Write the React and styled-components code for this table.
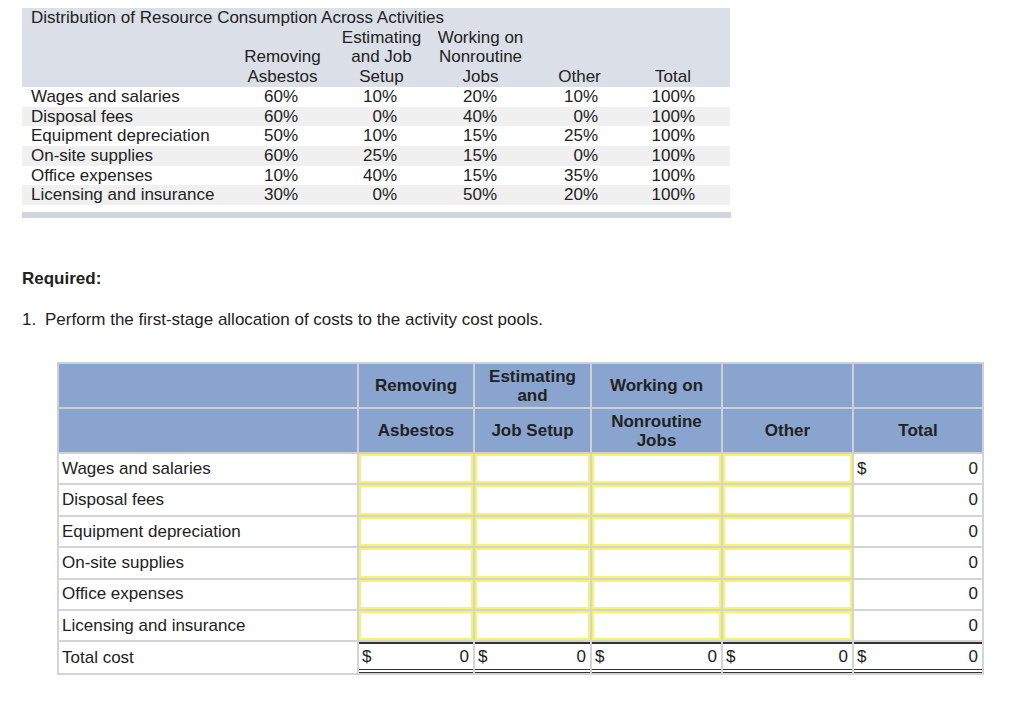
import React from "react";
import styled, { createGlobalStyle } from "styled-components";

const GlobalStyle = createGlobalStyle`
  body {
    margin: 0;
    background: #ffffff;
    font-family: "Liberation Sans", Arial, sans-serif;
    color: #222222;
  }
`;

const Page = styled.div`
  padding: 8px 0 0 22px;
  font-size: 17px;
`;

const DistTable = styled.table`
  width: 708px;
  border-collapse: collapse;
  table-layout: fixed;
  line-height: 19.7px;
`;

const TitleCell = styled.td`
  background: #dbdfe7;
  padding: 0 0 0 9px;
  white-space: nowrap;
`;

const HeadCell = styled.td`
  background: #dbdfe7;
  padding: 0;
  text-align: center;
  vertical-align: bottom;
  white-space: nowrap;
`;

const DistRow = styled.tr`
  background: ${(p) => (p.$shaded ? "#f0f0f0" : "#ffffff")};
`;

const LabelCell = styled.td`
  padding: 0 0 0 9px;
  white-space: nowrap;
`;

const PctCell = styled.td`
  padding: 0 ${(p) => p.$pr}px 0 0;
  text-align: right;
  white-space: nowrap;
`;

const Bar = styled.div`
  width: 709px;
  height: 6px;
  margin-top: 7px;
  background: #d1d5e0;
`;

const Required = styled.div`
  margin-top: 51px;
  line-height: 20px;
  font-weight: bold;
`;

const Step = styled.div`
  margin-top: 21px;
  line-height: 20px;
`;

const StepNum = styled.span`
  display: inline-block;
  width: 23px;
`;

const CostTable = styled.table`
  margin: 32px 0 0 35px;
  width: 925px;
  border-collapse: collapse;
  table-layout: fixed;
  border: 2px solid #d4d4d4;
`;

const BlueCell = styled.th`
  background: #88a4cf;
  border: 2px solid #d0d0d0;
  height: 43px;
  padding: 0 4px;
  font-weight: bold;
  line-height: 19px;
  text-align: center;
  vertical-align: middle;
  color: #222222;
`;

const BodyCell = styled.td`
  border: 2px solid #d4d4d4;
  height: 27.7px;
  padding: ${(p) => (p.$input ? "0" : "0 4px 0 3px")};
  text-align: ${(p) => (p.$num ? "right" : "left")};
  vertical-align: middle;
  white-space: nowrap;
`;

const InputBox = styled.div`
  height: 29.4px;
  box-sizing: border-box;
  border: 2px solid #f7f36a;
  background: #ffffff;
`;

const Money = styled.div`
  display: flex;
  justify-content: space-between;
`;

const TotalBox = styled.div`
  display: flex;
  justify-content: space-between;
  align-items: center;
  height: 30.5px;
  box-sizing: border-box;
  padding: 0 4px 0 3px;
  border-top: 2px solid #333333;
  border-bottom: 4px double #333333;
`;

const TotalCell = styled.td`
  border: 2px solid #d4d4d4;
  padding: 0;
  vertical-align: middle;
`;

const columns = [
  { head: ["", "Removing", "Asbestos"], pr: 34 },
  { head: ["Estimating", "and Job", "Setup"], pr: 34 },
  { head: ["Working on", "Nonroutine", "Jobs"], pr: 33 },
  { head: ["", "", "Other"], pr: 31 },
  { head: ["", "", "Total"], pr: 22 },
];

const distribution = [
  ["Wages and salaries", "60%", "10%", "20%", "10%", "100%"],
  ["Disposal fees", "60%", "0%", "40%", "0%", "100%"],
  ["Equipment depreciation", "50%", "10%", "15%", "25%", "100%"],
  ["On-site supplies", "60%", "25%", "15%", "0%", "100%"],
  ["Office expenses", "10%", "40%", "15%", "35%", "100%"],
  ["Licensing and insurance", "30%", "0%", "50%", "20%", "100%"],
];

const costRows = distribution.map((r) => r[0]);

export default function App() {
  return (
    <>
      <GlobalStyle />
      <Page>
        <DistTable>
          <colgroup>
            <col style={{ width: 211 }} />
            <col style={{ width: 99 }} />
            <col style={{ width: 99 }} />
            <col style={{ width: 99 }} />
            <col style={{ width: 99 }} />
            <col style={{ width: 88 }} />
            <col style={{ width: 13 }} />
          </colgroup>
          <tbody>
            <tr>
              <TitleCell colSpan={7}>
                Distribution of Resource Consumption Across Activities
              </TitleCell>
            </tr>
            <tr>
              <HeadCell />
              {columns.map((c, i) => (
                <HeadCell key={i}>
                  {c.head.map((line, j) => (
                    <div key={j}>{line || "\u00a0"}</div>
                  ))}
                </HeadCell>
              ))}
              <HeadCell />
            </tr>
            {distribution.map((row, i) => (
              <DistRow key={row[0]} $shaded={i % 2 === 1}>
                <LabelCell>{row[0]}</LabelCell>
                {row.slice(1).map((v, j) => (
                  <PctCell key={j} $pr={columns[j].pr}>
                    {v}
                  </PctCell>
                ))}
                <td />
              </DistRow>
            ))}
          </tbody>
        </DistTable>
        <Bar />

        <Required>Required:</Required>
        <Step>
          <StepNum>1.</StepNum>Perform the first-stage allocation of costs to
          the activity cost pools.
        </Step>

        <CostTable>
          <colgroup>
            <col style={{ width: 300 }} />
            <col style={{ width: 116 }} />
            <col style={{ width: 117 }} />
            <col style={{ width: 131 }} />
            <col style={{ width: 131 }} />
            <col style={{ width: 130 }} />
          </colgroup>
          <thead>
            <tr>
              <BlueCell />
              <BlueCell>Removing</BlueCell>
              <BlueCell>
                Estimating
                <br />
                and
              </BlueCell>
              <BlueCell>Working on</BlueCell>
              <BlueCell />
              <BlueCell />
            </tr>
            <tr>
              <BlueCell />
              <BlueCell>Asbestos</BlueCell>
              <BlueCell>Job Setup</BlueCell>
              <BlueCell>
                Nonroutine
                <br />
                Jobs
              </BlueCell>
              <BlueCell>Other</BlueCell>
              <BlueCell>Total</BlueCell>
            </tr>
          </thead>
          <tbody>
            {costRows.map((label, i) => (
              <tr key={label}>
                <BodyCell>{label}</BodyCell>
                {[0, 1, 2, 3].map((j) => (
                  <BodyCell key={j} $input>
                    <InputBox />
                  </BodyCell>
                ))}
                <BodyCell $num>
                  {i === 0 ? (
                    <Money>
                      <span>$</span>
                      <span>0</span>
                    </Money>
                  ) : (
                    "0"
                  )}
                </BodyCell>
              </tr>
            ))}
            <tr>
              <BodyCell>Total cost</BodyCell>
              {[0, 1, 2, 3, 4].map((j) => (
                <TotalCell key={j}>
                  <TotalBox>
                    <span>$</span>
                    <span>0</span>
                  </TotalBox>
                </TotalCell>
              ))}
            </tr>
          </tbody>
        </CostTable>
      </Page>
    </>
  );
}
